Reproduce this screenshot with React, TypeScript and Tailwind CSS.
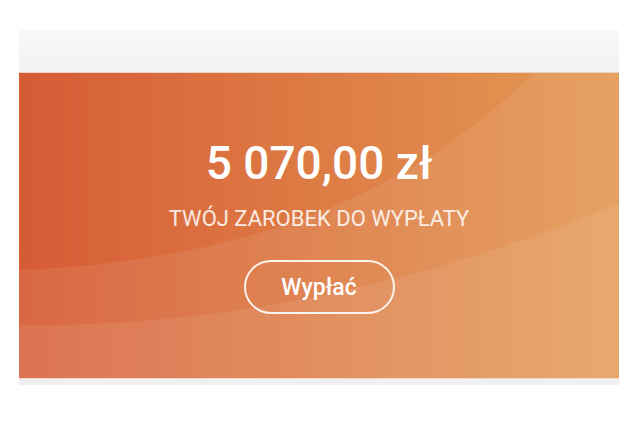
import React from "react";

function Waves() {
    return (
        <svg
            className="absolute inset-0 w-full h-full"
            viewBox="0 0 600 305"
            preserveAspectRatio="none"
        >
            <path d="M0,197 Q330,185 514,0 L600,0 L600,305 L0,305 Z" fill="#ffffff" fillOpacity="0.08" />
            <path d="M0,252 Q300,255 600,130 L600,305 L0,305 Z" fill="#ffffff" fillOpacity="0.08" />
        </svg>
    );
}

export default function App() {
    return (
        <div className="w-full h-[432px] bg-white pt-[30px] font-['Roboto','Liberation_Sans',sans-serif]">
            <div className="ml-[19px] w-[600px]">
                <div className="h-[43px] bg-gradient-to-b from-[#f8f8f8] to-[#f2f2f2] border-b border-[#ecd3c8]" />

                <div className="relative h-[305px] bg-gradient-to-r from-[#d65b35] to-[#e39a55] overflow-hidden">
                    <Waves />
                    <div className="relative flex flex-col items-center pt-[67px]">
                        <span className="text-[46px] leading-[46px] font-medium text-white">5 070,00 zł</span>
                        <span className="mt-[22px] text-[22px] leading-[22px] text-white/85">TWÓJ ZAROBEK DO WYPŁATY</span>
                        <button className="mt-[30px] w-[151px] h-[54px] rounded-full border-2 border-white/90 text-white text-[23px] leading-none font-medium">
                            Wypłać
                        </button>
                    </div>
                </div>

                <div className="h-[7px] bg-[#f0f0f0] border-t border-[#f3d9c9]" />
            </div>
        </div>
    );
}
